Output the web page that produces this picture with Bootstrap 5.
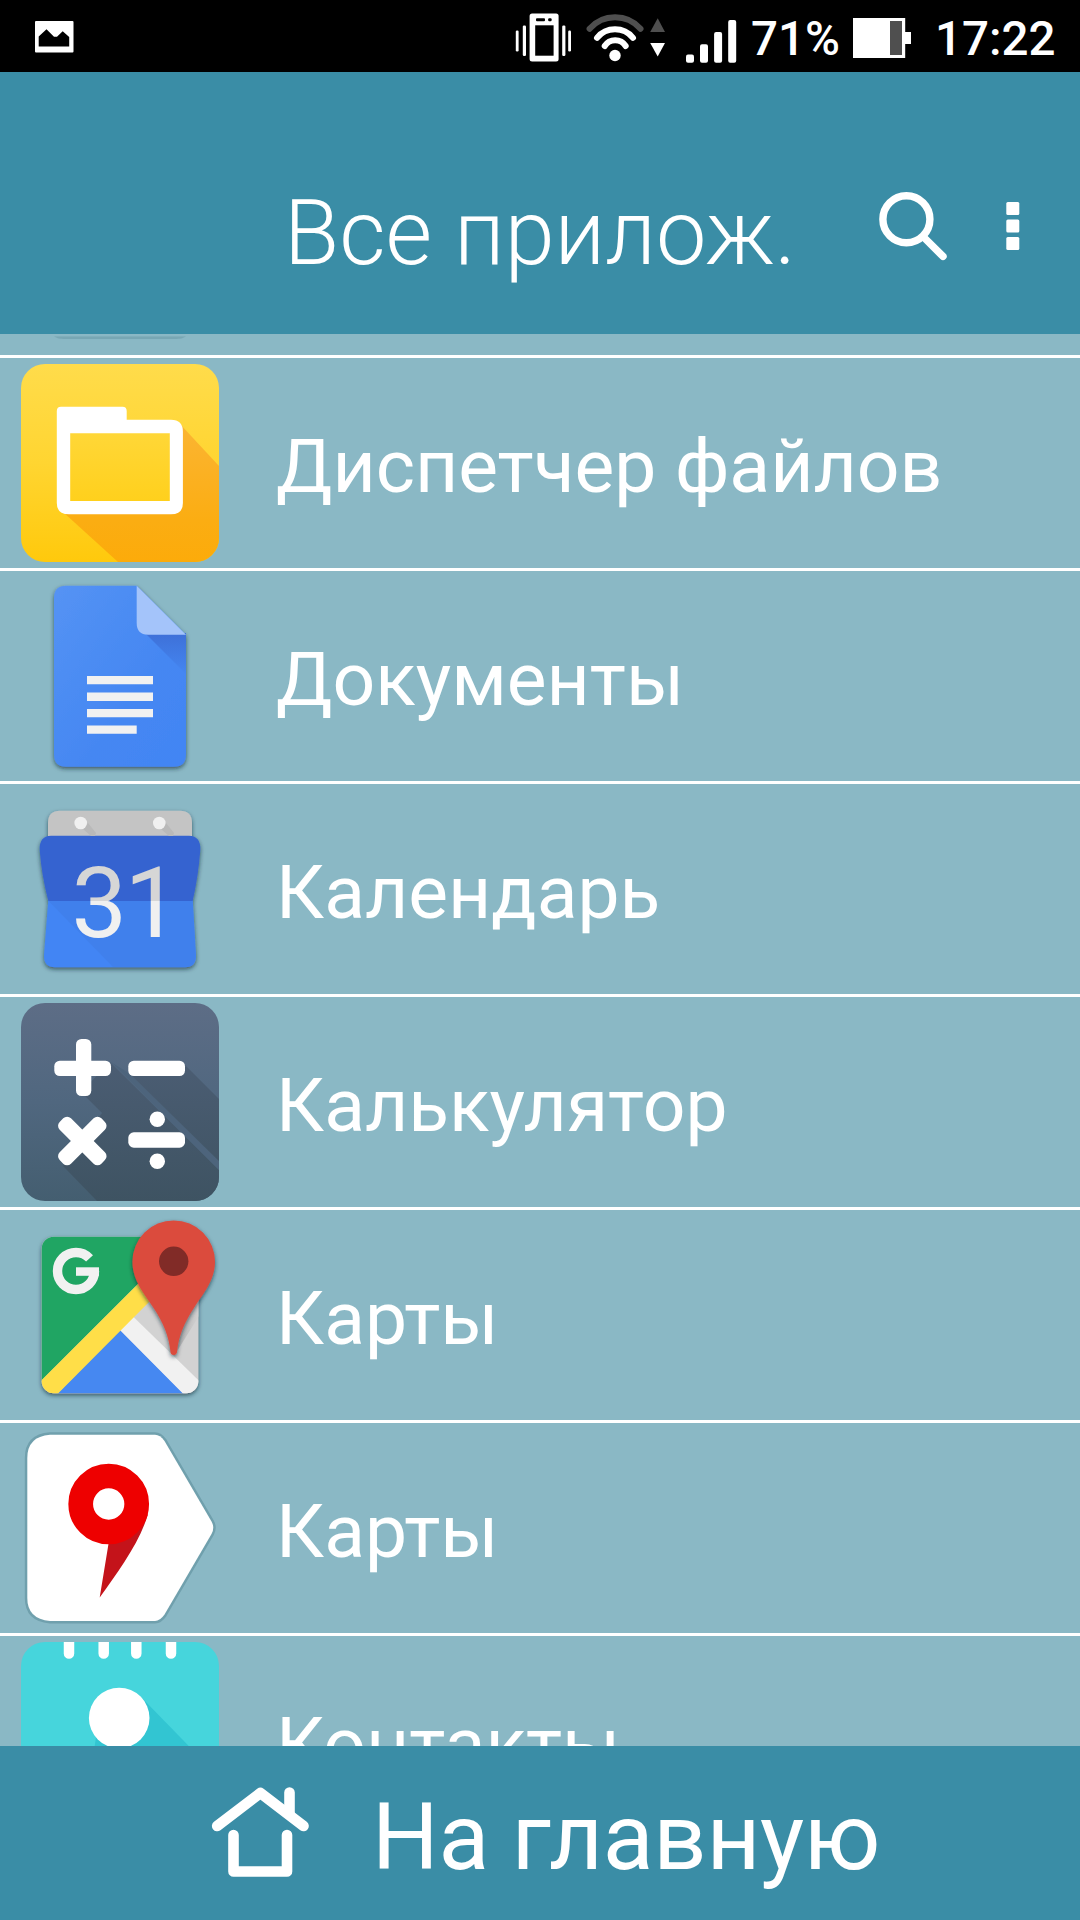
<!DOCTYPE html>
<html lang="ru">

<head>
  <meta charset="UTF-8" />
  <title>Все приложения</title>
  <meta name="viewport" content="width=device-width, initial-scale=1" />
  <link href="https://cdn.jsdelivr.net/npm/bootstrap@5.3.0/dist/css/bootstrap.min.css" rel="stylesheet" />
  <style>
    body {
      font-family: Roboto, "Noto Sans", sans-serif;
      background-color: #8ab8c5;
      color: #fff;
      height: 1920px;
      overflow: hidden;
    }

    svg {
      display: block;
      flex-shrink: 0;
    }

    .status-bar {
      height: 72px;
      background-color: #000;
      font-size: 47.5px;
      font-weight: 500;
      line-height: 72px;
    }

    .status-text {
      padding-top: 3px;
      height: 72px;
    }

    .status-percent {
      width: 97px;
    }

    .status-time {
      width: 145px;
    }

    .app-header {
      height: 262px;
      background-color: #3a8da6;
      padding-left: 284px;
    }

    .app-title {
      font-size: 90px;
      font-weight: 300;
      line-height: 106px;
      padding-top: 109px;
      width: 578px;
    }

    .app-list {
      height: 1412px;
    }

    .app-item {
      height: 213px;
      border-bottom: 3px solid #fff;
      padding: 6px 21px;
    }

    .prev-item {
      height: 24px;
      padding-top: 0;
      padding-bottom: 0;
    }

    .app-name {
      font-size: 75px;
      line-height: 88px;
      margin-left: 57px;
      padding-top: 6px;
    }

    .home-bar {
      height: 174px;
      background-color: #3a8da6;
      font-size: 93.5px;
      line-height: 110px;
      padding-left: 211px;
    }

    .home-text {
      margin-left: 62px;
      padding-top: 8px;
      letter-spacing: -0.3px;
    }
  </style>
</head>

<body class="d-flex flex-column">

  <!-- статус-бар -->
  <div class="status-bar d-flex flex-shrink-0">
    <svg width="74" height="72" viewBox="0 0 74 72">
      <rect x="35" y="21" width="38.5" height="31.5" rx="1" fill="#fff" />
      <path d="M38.7 46.5V36.5L46.5 29.3L54 36.7H57L62.7 31.3L69.2 37V46.5Z" />
    </svg>
    <svg class="ms-auto" width="240" height="72" viewBox="511 0 240 72" fill="#fff">
      <!-- вибрация -->
      <rect x="529.6" y="13.5" width="29" height="48" rx="2.5" />
      <rect x="535.2" y="25.3" width="18.4" height="30.4" fill="#000" />
      <rect x="536" y="18.3" width="9" height="3" rx="1" fill="#000" />
      <rect x="548.2" y="18.3" width="3.4" height="3" rx="1" fill="#000" />
      <rect x="515.8" y="30.5" width="2.8" height="21" rx="1.2" />
      <rect x="522.8" y="25.5" width="3.2" height="30.5" rx="1.2" />
      <rect x="562.2" y="25.5" width="3.2" height="30.5" rx="1.2" />
      <rect x="568.2" y="30.5" width="2.8" height="21" rx="1.2" />
      <!-- wi-fi -->
      <g fill="none" stroke="#fff" stroke-width="6" stroke-linecap="round">
        <path d="M589.6 28.8A34 34 0 0 1 640.5 28.8" stroke="#4f4f4f" />
        <path d="M597 37.8A23.3 23.3 0 0 1 633 37.8" />
        <path d="M604.7 46A12.5 12.5 0 0 1 625.7 46" />
      </g>
      <circle cx="615" cy="55.5" r="5.7" />
      <path d="M657.7 18.3L665 32H650.2Z" fill="#4f4f4f" />
      <path d="M650.2 43H665L657.7 56.5Z" />
      <!-- сигнал -->
      <rect x="686" y="54.5" width="8" height="8.3" rx="2" />
      <rect x="700" y="44.3" width="8" height="18.5" rx="2" />
      <rect x="714.1" y="32" width="8" height="30.8" rx="2" />
      <rect x="728.2" y="20" width="8" height="42.8" rx="2" />
    </svg>
    <div class="status-text status-percent">71%</div>
    <svg width="87" height="72" viewBox="848 0 87 72">
      <path d="M853 18H905.2V32H911V44H905.2V58H853Z" fill="#fff" />
      <rect x="890" y="21" width="12" height="34" fill="#4f4f4f" />
    </svg>
    <div class="status-text status-time">17:22</div>
  </div>

  <!-- заголовок -->
  <div class="app-header d-flex flex-shrink-0">
    <div class="app-title text-nowrap">Все прилож.</div>
    <svg width="218" height="262" viewBox="862 72 218 262" fill="#fff">
      <circle cx="906.4" cy="219.2" r="23.5" fill="none" stroke="#fff" stroke-width="7.4" />
      <path d="M924.5 238L943 256.4" stroke="#fff" stroke-width="7.4" stroke-linecap="round" />
      <rect x="1006.3" y="202" width="13" height="13" rx="1.5" />
      <rect x="1006.3" y="219.5" width="13" height="13" rx="1.5" />
      <rect x="1006.3" y="237" width="13" height="13" rx="1.5" />
    </svg>
  </div>

  <!-- список приложений -->
  <div class="app-list flex-shrink-0 overflow-hidden">
    <div class="app-item prev-item">
      <svg width="198" height="21" viewBox="0 0 198 21">
        <path d="M33 2.5H165Q161 5 155 5H43Q37 5 33 2.5Z" fill="#6c9ba8" opacity=".6" />
      </svg>
    </div>

    <div class="app-item d-flex align-items-center">
      <svg width="198" height="198" viewBox="0 0 198 198">
        <defs>
          <linearGradient id="yellow" x2="0" y2="1">
            <stop stop-color="#ffdc4b" />
            <stop offset=".5" stop-color="#ffd531" />
            <stop offset="1" stop-color="#ffc90c" />
          </linearGradient>
          <linearGradient id="orange" x2="0" y2="1">
            <stop stop-color="#fbb533" />
            <stop offset=".7" stop-color="#fbad12" />
            <stop offset="1" stop-color="#fcab0a" />
          </linearGradient>
          <linearGradient id="folderFill" x2="0" y2="1">
            <stop stop-color="#ffd738" />
            <stop offset="1" stop-color="#ffd01c" />
          </linearGradient>
          <clipPath id="tile">
            <rect width="198" height="198" rx="24" />
          </clipPath>
        </defs>
        <g clip-path="url(#tile)">
          <rect width="198" height="198" fill="url(#yellow)" />
          <path d="M159 60L198 102V198H97L42 148L100 100Z" fill="url(#orange)" />
          <rect x="48" y="68" width="102" height="70" fill="url(#folderFill)" />
        </g>
        <path fill="#fff" fill-rule="evenodd"
          d="M40 42.7H101.5Q105.7 42.7 105.7 47V55.7H150Q161.9 56 161.9 67.5V139Q161.9 150.3 150 150.3H48Q35.8 150.3 35.8 139V47Q35.8 42.7 40 42.7ZM49.2 69.3V137H148.8V69.3Z" />
      </svg>
      <div class="app-name">Диспетчер файлов</div>
    </div>

    <div class="app-item d-flex align-items-center">
      <svg width="198" height="198" viewBox="0 0 198 198">
        <defs>
          <linearGradient id="doc" x2="1" y2="1">
            <stop stop-color="#5593f4" />
            <stop offset=".6" stop-color="#4587f2" />
            <stop offset="1" stop-color="#4285f4" />
          </linearGradient>
          <linearGradient id="docShade" x2="0" y2="1">
            <stop stop-color="#3e70d8" />
            <stop offset="1" stop-color="#4486f1" />
          </linearGradient>
          <filter id="drop" x="-10%" y="-10%" width="120%" height="120%">
            <feDropShadow dx="0" dy="2" stdDeviation="2" flood-color="#112233" flood-opacity=".65" />
          </filter>
        </defs>
        <path d="M45 8.7H115.7L165 57.7V177.5Q165 189.7 153 189.7H45Q33 189.7 33 177.5V21Q33 8.7 45 8.7Z" fill="url(#doc)" filter="url(#drop)" />
        <path d="M124 56L165 97V56Z" fill="url(#docShade)" />
        <path d="M115.7 8.7L165 57.7H127Q115.7 57.7 115.7 46Z" fill="#a4c4fa" />
        <path d="M66 99H132V107.3H66ZM66 115.5H132V124H66ZM66 132H132V140.3H66ZM66 148.5H115.7V156.8H66Z" fill="#f1f1f1" />
      </svg>
      <div class="app-name">Документы</div>
    </div>

    <div class="app-item d-flex align-items-center">
      <svg width="198" height="198" viewBox="0 0 198 198">
        <defs>
          <linearGradient id="digits" gradientUnits="userSpaceOnUse" x1="0" y1="0" x2="0" y2="198">
            <stop offset=".56" stop-color="#d6d6d6" />
            <stop offset=".56" stop-color="#f0f0f0" />
          </linearGradient>
        </defs>
        <g filter="url(#drop)">
          <path d="M27 48V33Q27 20.7 39 20.7H159Q171 20.7 171 33V48Z" fill="#c4c4c4" />
          <path d="M27.3 110H171.7L175 165Q175.5 177.3 164 177.3H34Q22.5 177.3 23 165Z" fill="#4285f4" />
          <path d="M30 45.7H168Q180 46 179.3 60Q177.5 85 171.7 111H27.3Q20.5 85 18.7 60Q18 46 30 45.7Z" fill="#3664d0" />
        </g>
        <path d="M27.5 111H171.5L174.5 165Q175 177 164 177H92Z" fill="#3f7ee8" opacity=".65" />
        <path d="M62 39L67 33L75 43L74 46H70ZM140 39L145 33L153 43L152 46H148Z" fill="#b9b9b9" />
        <circle cx="59.7" cy="33" r="6.3" fill="#f0f0f0" />
        <circle cx="138.3" cy="33" r="6.3" fill="#f0f0f0" />
        <text x="50.5" y="146.5" font-size="99" fill="url(#digits)">3<tspan x="103.5">1</tspan></text>
      </svg>
      <div class="app-name">Календарь</div>
    </div>

    <div class="app-item d-flex align-items-center">
      <svg width="198" height="198" viewBox="0 0 198 198">
        <defs>
          <linearGradient id="slate" x2="0" y2="1">
            <stop stop-color="#5d6d86" />
            <stop offset=".5" stop-color="#50677f" />
            <stop offset="1" stop-color="#445e70" />
          </linearGradient>
          <linearGradient id="slateShade" gradientUnits="userSpaceOnUse" x1="0" y1="60" x2="0" y2="198">
            <stop stop-color="#4b5d73" />
            <stop offset="1" stop-color="#3e5362" />
          </linearGradient>
        </defs>
        <g clip-path="url(#tile)">
          <rect width="198" height="198" fill="url(#slate)" />
          <path d="M89 59L198 167V198H76L42 163L60 138L81 110L60 89Z" fill="url(#slateShade)" />
          <path d="M90 59L198 167V158L109 71Z" fill="#4d647c" />
          <path d="M109 71L198 158V96L163 61Z" fill="url(#slateShade)" />
        </g>
        <g fill="#fff">
          <rect x="33.3" y="57.7" width="56.7" height="15.3" rx="5.5" />
          <rect x="55" y="36" width="15.3" height="57" rx="5.5" />
          <rect x="107.3" y="57.7" width="56.7" height="15.3" rx="5.5" />
          <g transform="rotate(45 61.3 138)">
            <rect x="31.8" y="130" width="59" height="16" rx="5.5" />
            <rect x="53.3" y="108.5" width="16" height="59" rx="5.5" />
          </g>
          <rect x="107.3" y="129.3" width="56.7" height="15.4" rx="5.5" />
          <circle cx="136.3" cy="116.3" r="7.7" />
          <circle cx="136.3" cy="158.2" r="7.7" />
        </g>
      </svg>
      <div class="app-name">Калькулятор</div>
    </div>

    <div class="app-item d-flex align-items-center">
      <svg width="198" height="198" viewBox="0 0 198 198">
        <defs>
          <clipPath id="mapTile">
            <rect x="20.7" y="20.7" width="156.6" height="156.6" rx="12" />
          </clipPath>
          <linearGradient id="pinShade" x2="1" y2="0">
            <stop stop-color="#a9a9a9" />
            <stop offset="1" stop-color="#d2d2d2" />
          </linearGradient>
        </defs>
        <rect x="20.7" y="20.7" width="156.6" height="156.6" rx="12" fill="#d2d2d2" filter="url(#drop)" />
        <g clip-path="url(#mapTile)">
          <path d="M20 20H165L20 165Z" fill="#20a563" />
          <path d="M99 114L36 178H163Z" fill="#4688f1" />
          <path d="M153 140L178 100V60L150 80Z" fill="url(#pinShade)" />
          <path d="M112.3 100.7L178 164.7V178H162.4L99 114Z" fill="#f1f1f1" />
          <path d="M20 164.7L125 60L138 76L36.5 178H20Z" fill="#ffde48" />
        </g>
        <circle cx="55" cy="55" r="18.5" fill="none" stroke="#f1f1f1" stroke-width="9.4" stroke-dasharray="101.7 20" />
        <rect x="55" y="51.3" width="23" height="8.5" fill="#f1f1f1" />
        <path filter="url(#drop)" fill="#db4b3e"
          d="M152.7 4.4A41.3 41.3 0 0 1 194 45.7C194 64 182 78 173.5 91C163 107 157.5 120 156 136Q155.5 139 152.7 139Q149.9 139 149.5 136C148 120 142.5 107 132 91C123.5 78 111.4 64 111.4 45.7A41.3 41.3 0 0 1 152.7 4.4Z" />
        <circle cx="152.7" cy="45.3" r="14.7" fill="#812b27" />
      </svg>
      <div class="app-name">Карты</div>
    </div>

    <div class="app-item d-flex align-items-center">
      <svg width="198" height="198" viewBox="0 0 198 198">
        <path d="M29 5.7H134Q139 5.7 143.5 12L190.5 92.5Q194 98.7 190.5 105L143.5 185.5Q139 192 134 192H29Q6.3 190 6.3 169V29Q6.3 7.5 29 5.7Z"
          fill="#fff" stroke="#6b9ba8" stroke-width="5" stroke-opacity=".85" paint-order="stroke" />
        <path d="M88.3 110L78.7 168.5C97 143 119 113 127 85Z" fill="#c4131a" />
        <circle cx="87.7" cy="75" r="28" fill="none" stroke="#ee0000" stroke-width="24.7" />
      </svg>
      <div class="app-name">Карты</div>
    </div>

    <div class="app-item d-flex align-items-center">
      <svg width="198" height="198" viewBox="0 0 198 198">
        <g clip-path="url(#tile)">
          <rect width="198" height="198" fill="#46d5dc" />
          <path d="M122 57L198 135V198H60L75 95Z" fill="#32c5d2" />
          <path d="M48 0V11.5M82.7 0V11.5M115.3 0V11.5M150 0V11.5" stroke="#fff" stroke-width="10.5" stroke-linecap="round" />
          <circle cx="98.2" cy="76" r="30.3" fill="#fff" />
          <rect x="44" y="112" width="108" height="50" rx="25" fill="#fff" />
        </g>
      </svg>
      <div class="app-name">Контакты</div>
    </div>
  </div>

  <!-- нижняя кнопка -->
  <div class="home-bar d-flex align-items-center flex-shrink-0">
    <svg width="99" height="174" viewBox="211 1746 99 174" fill="none" stroke="#fff" stroke-width="10.6" stroke-linecap="round" stroke-linejoin="round">
      <path d="M217.2 1826L260.4 1793L303.5 1826" />
      <path d="M289.5 1792.5V1813" />
      <path d="M233.5 1835V1871.5H287V1835" />
    </svg>
    <div class="home-text">На главную</div>
  </div>

  <script src="https://cdn.jsdelivr.net/npm/bootstrap@5.3.0/dist/js/bootstrap.bundle.min.js"></script>
</body>

</html>
